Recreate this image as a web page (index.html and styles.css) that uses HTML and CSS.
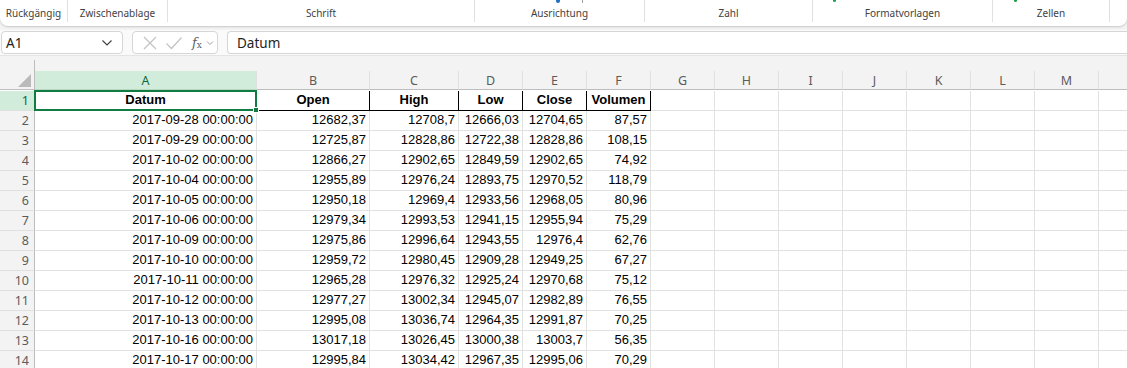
FILE: index.html
```html
<!DOCTYPE html>
<html lang="de">
<head>
    <meta charset="UTF-8">
    <meta name="viewport" content="width=device-width, initial-scale=1.0">
    <title>Mappe1 - Excel</title>
    <link rel="stylesheet" href="styles.css">
</head>
<body>
    <div class="ribbon">
        <div class="group" style="width: 68px">
            <span class="groupLabel">Rückgängig</span>
        </div>
        <div class="group" style="width: 100px">
            <span class="groupLabel">Zwischenablage</span>
        </div>
        <div class="group" style="width: 307px">
            <span class="groupLabel">Schrift</span>
        </div>
        <div class="group" style="width: 170px">
            <span class="iconTip blueTip" style="left: 81px"></span>
            <span class="iconTip greyTip" style="left: 107px"></span>
            <span class="groupLabel">Ausrichtung</span>
        </div>
        <div class="group" style="width: 168px">
            <span class="groupLabel">Zahl</span>
        </div>
        <div class="group" style="width: 180px">
            <span class="iconTip greenTip" style="left: 20px"></span>
            <span class="groupLabel">Formatvorlagen</span>
        </div>
        <div class="group" style="width: 117px">
            <span class="iconTip greenTip" style="left: 21px"></span>
            <span class="groupLabel">Zellen</span>
        </div>
        <div class="group last"></div>
    </div>

    <div class="formulaRow">
        <div class="nameBox">
            <span>A1</span>
            <svg width="12" height="8" viewBox="0 0 12 8"><path d="M1.5 1.5 L6 6 L10.5 1.5" fill="none" stroke="#424242" stroke-width="1.2"/></svg>
        </div>
        <div class="fxBox">
            <svg width="16" height="16" viewBox="0 0 16 16"><path d="M2 2 L14 14 M14 2 L2 14" stroke="#c4c4c4" stroke-width="1.3"/></svg>
            <svg width="18" height="16" viewBox="0 0 18 16"><path d="M1.5 8.5 L6.5 13.5 L16.5 2.5" fill="none" stroke="#c4c4c4" stroke-width="1.3"/></svg>
            <span class="fx"><i>f</i><sub>x</sub></span>
            <svg width="8" height="6" viewBox="0 0 8 6"><path d="M1 1.5 L4 4.5 L7 1.5" fill="none" stroke="#a0a0a0" stroke-width="1"/></svg>
        </div>
        <div class="formulaInput">Datum</div>
    </div>

    <div class="sheet">
        <div class="sheetGrid" id="sheetGrid"></div>
    </div>

    <script>
        // N is only partly visible, so its header stays empty
        const columns = ['A', 'B', 'C', 'D', 'E', 'F', 'G', 'H', 'I', 'J', 'K', 'L', 'M', ''];
        const headers = ['Datum', 'Open', 'High', 'Low', 'Close', 'Volumen'];
        const rows = [
            ['2017-09-28 00:00:00', '12682,37', '12708,7', '12666,03', '12704,65', '87,57'],
            ['2017-09-29 00:00:00', '12725,87', '12828,86', '12722,38', '12828,86', '108,15'],
            ['2017-10-02 00:00:00', '12866,27', '12902,65', '12849,59', '12902,65', '74,92'],
            ['2017-10-04 00:00:00', '12955,89', '12976,24', '12893,75', '12970,52', '118,79'],
            ['2017-10-05 00:00:00', '12950,18', '12969,4', '12933,56', '12968,05', '80,96'],
            ['2017-10-06 00:00:00', '12979,34', '12993,53', '12941,15', '12955,94', '75,29'],
            ['2017-10-09 00:00:00', '12975,86', '12996,64', '12943,55', '12976,4', '62,76'],
            ['2017-10-10 00:00:00', '12959,72', '12980,45', '12909,28', '12949,25', '67,27'],
            ['2017-10-11 00:00:00', '12965,28', '12976,32', '12925,24', '12970,68', '75,12'],
            ['2017-10-12 00:00:00', '12977,27', '13002,34', '12945,07', '12982,89', '76,55'],
            ['2017-10-13 00:00:00', '12995,08', '13036,74', '12964,35', '12991,87', '70,25'],
            ['2017-10-16 00:00:00', '13017,18', '13026,45', '13000,38', '13003,7', '56,35'],
            ['2017-10-17 00:00:00', '12995,84', '13034,42', '12967,35', '12995,06', '70,29']
        ];
        const grid = document.getElementById('sheetGrid');

        function addCell(className, text) {
            const cell = document.createElement('div');
            cell.className = className;
            cell.textContent = text || '';
            grid.appendChild(cell);
            return cell;
        }

        // column headers
        const corner = addCell('corner');
        corner.innerHTML = '<span class="cornerTriangle"></span>';
        columns.forEach((col, i) => {
            addCell(i === 0 ? 'colHead selected' : 'colHead', col);
        });

        // row 1 with the bold header
        addCell('rowHead selected', '1');
        columns.forEach((col, i) => {
            if (i === 0) {
                const active = addCell('cell header activeCell', headers[0]);
                active.innerHTML += '<span class="fillHandle"></span>';
            } else if (i < headers.length) {
                addCell('cell header bordered', headers[i]);
            } else {
                addCell('cell');
            }
        });

        rows.forEach((row, r) => {
            addCell('rowHead', String(r + 2));
            columns.forEach((col, i) => {
                addCell('cell number', row[i]);
            });
        });
    </script>
</body>
</html>
```

FILE: styles.css
```css
body {
    margin: 0;
    padding: 0;
    width: 1127px;
    height: 368px;
    overflow: hidden;
    background-color: #f3f3f3;
    font-family: "Noto Sans", "Open Sans", sans-serif;
    color: #242424;
}

.ribbon {
    display: flex;
    height: 26px;
    background-color: #ffffff;
    border-radius: 0 0 8px 8px;
    box-shadow: 0 1px 2px rgba(0, 0, 0, 0.18);
    position: relative;
    z-index: 2;
}

.group {
    position: relative;
    box-sizing: border-box;
    height: 22px;
    border-right: 1px solid #e0e0e0;
    display: flex;
    align-items: flex-end;
    justify-content: center;
}

.group.last {
    flex: 1;
    border-right: none;
}

.groupLabel {
    font-size: 10px;
    line-height: 14px;
    color: #424242;
    padding-bottom: 2px;
}

.iconTip {
    position: absolute;
    top: 0;
    height: 3px;
}

.blueTip {
    width: 4px;
    background-color: #1f6fc5;
    border-radius: 0 0 2px 2px;
}

.greyTip {
    width: 1px;
    background-color: #9a9a9a;
}

.greenTip {
    width: 3px;
    height: 2px;
    background-color: #1e9e4a;
    border-radius: 0 0 2px 2px;
}

.formulaRow {
    display: flex;
    align-items: center;
    gap: 9px;
    margin-top: 4px;
    height: 25px;
    padding-left: 1px;
    background-color: #fafafa;
    border-bottom: 1px solid #e4e4e4;
}

.nameBox,
.fxBox,
.formulaInput {
    box-sizing: border-box;
    height: 23px;
    background-color: #ffffff;
    border: 1px solid #d6d6d6;
    border-radius: 4px;
    display: flex;
    align-items: center;
}

.nameBox {
    width: 122px;
    justify-content: space-between;
    padding: 0 9px 0 4px;
    font-size: 13.5px;
    color: #242424;
}

.fxBox {
    width: 86px;
    padding: 0 0 0 9px;
    gap: 7px;
}

.fxBox .fx {
    font-family: "DejaVu Serif", "Liberation Serif", serif;
    font-size: 13px;
    color: #616161;
    margin-left: 2px;
    margin-right: -3px;
}

.fxBox .fx i {
    font-style: italic;
}

.fxBox .fx sub {
    font-size: 9px;
    vertical-align: -1px;
    font-style: normal;
}

.formulaInput {
    flex: 1;
    border-right: none;
    border-radius: 4px 0 0 4px;
    padding-left: 9px;
    font-size: 13.5px;
    color: #242424;
}

.sheet {
    padding-top: 15px;
}

.sheetGrid {
    display: grid;
    grid-template-columns: 35px 222px 113px 89px 64px 64px 64px 64px 64px 64px 64px 64px 64px 64px 64px;
    grid-auto-rows: 20px;
    background-color: #ffffff;
    font-family: "Liberation Sans", Arial, sans-serif;
}

.corner,
.colHead,
.rowHead,
.cell {
    box-sizing: border-box;
    position: relative;
}

.corner {
    height: 19px;
    align-self: start;
    background-color: #f3f3f3;
    border-right: 1px solid #bdbdbd;
    border-bottom: 1px solid #bdbdbd;
    grid-row: 1;
}

.corner::before {
    content: "";
    position: absolute;
    right: -1px;
    top: -11px;
    height: 11px;
    border-right: 1px solid #bdbdbd;
}

.cornerTriangle {
    position: absolute;
    right: 3px;
    bottom: 2px;
    width: 0;
    height: 0;
    border-left: 13px solid transparent;
    border-bottom: 13px solid #bababa;
}

.colHead {
    height: 19px;
    background-color: #f3f3f3;
    border-right: 1px solid #e0e0e0;
    border-bottom: 1px solid #bdbdbd;
    display: flex;
    align-items: center;
    justify-content: center;
    font-family: "Noto Sans", "Open Sans", sans-serif;
    font-size: 12.5px;
    color: #5b5b5b;
}

.colHead.selected {
    background-color: #d2ecdc;
    color: #0f6b3a;
    border-bottom: 1px solid #b8d8c4;
}

.rowHead {
    background-color: #f3f3f3;
    border-right: 1px solid #bdbdbd;
    border-bottom: 1px solid #e0e0e0;
    display: flex;
    align-items: center;
    justify-content: flex-end;
    padding-right: 5px;
    font-family: "Noto Sans", "Open Sans", sans-serif;
    font-size: 12.5px;
    color: #5b5b5b;
}

.rowHead.selected {
    background-color: #d2ecdc;
    color: #0f6b3a;
}

.cell {
    border-right: 1px solid #e1e1e1;
    border-bottom: 1px solid #e1e1e1;
    font-size: 13px;
    line-height: 18px;
    color: #000000;
    padding: 0 3px;
    white-space: nowrap;
    overflow: visible;
}

.cell.number {
    text-align: right;
}

.cell.header {
    font-weight: bold;
    text-align: center;
}

.cell.bordered {
    border-right: 1px solid #000000;
    border-bottom: 1px solid #000000;
}

.activeCell {
    margin-left: -1px;
    border: 2px solid #107c41;
    line-height: 16px;
    margin-top: -1px;
    height: 21px;
    z-index: 3;
}

.fillHandle {
    position: absolute;
    right: -4px;
    bottom: -4px;
    width: 6px;
    height: 6px;
    background-color: #107c41;
    border: 1px solid #ffffff;
    box-sizing: border-box;
}
```
